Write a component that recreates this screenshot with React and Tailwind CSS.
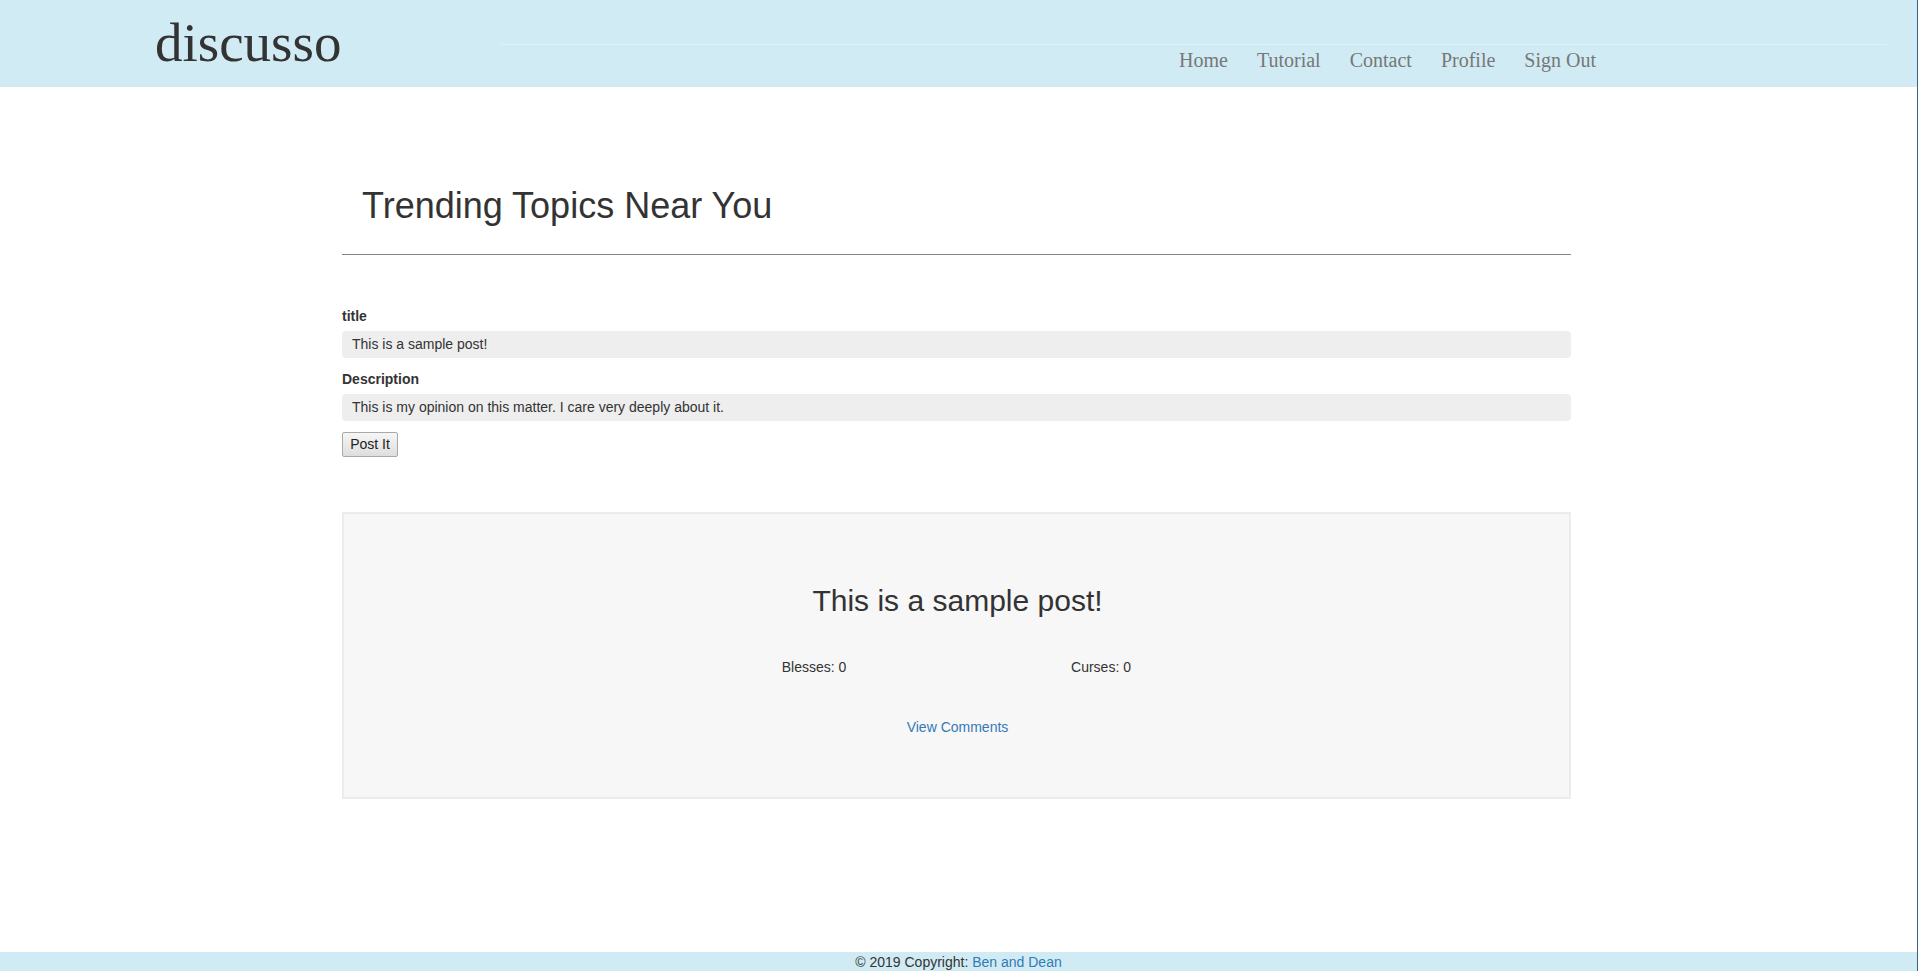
import React from 'react';

const navLinks = ['Home', 'Tutorial', 'Contact', 'Profile', 'Sign Out'];

function Header() {
  return (
    <header className="h-[87px] bg-[#d0ebf3] border-b border-[#dbe7eb] flex font-['Liberation_Serif',Georgia,serif]">
      <div className="pl-[155px] pt-[15px]">
        <span className="text-[55px] leading-none text-[#333]">discusso</span>
      </div>
      <div className="flex-1 ml-[159px] mr-[30px] mt-[44px]">
        <nav className="border-t border-[#e2f0f5] pt-[5px] pr-[291px] flex justify-end gap-[29px]">
          {navLinks.map((link) => (
            <a key={link} href="#" className="text-[20px] leading-none text-[#777]">
              {link}
            </a>
          ))}
        </nav>
      </div>
    </header>
  );
}

function PostForm() {
  return (
    <form className="mt-[51px] flex flex-col items-start">
      <label className="font-bold text-[14px] leading-5 mb-[5px]">title</label>
      <div className="w-full h-[27px] rounded bg-[#eee] pl-[10px] flex items-center text-[14px]">
        This is a sample post!
      </div>
      <label className="font-bold text-[14px] leading-5 mb-[5px] mt-[11px]">Description</label>
      <div className="w-full h-[27px] rounded bg-[#eee] pl-[10px] flex items-center text-[14px]">
        This is my opinion on this matter. I care very deeply about it.
      </div>
      <button
        type="button"
        className="mt-[11px] w-[56px] h-[25px] text-[14px] text-[#222] rounded-[2px] border border-[#a9a9a9] bg-gradient-to-b from-[#f6f6f6] to-[#dedede]"
      >
        Post It
      </button>
    </form>
  );
}

function PostCard({ title, blesses, curses }) {
  return (
    <div className="mt-[55px] h-[287px] border-2 border-[#ececec] bg-[#f7f7f7] flex flex-col items-center pt-[70px] pl-[2px]">
      <h2 className="text-[30px] leading-[33px]">{title}</h2>
      <div className="mt-[40px] flex text-[14px] leading-5">
        <span className="w-[287px] text-center">Blesses: {blesses}</span>
        <span className="w-[287px] text-center">Curses: {curses}</span>
      </div>
      <a href="#" className="mt-[40px] text-[14px] leading-5 text-[#337ab7]">
        View Comments
      </a>
    </div>
  );
}

export default function App() {
  return (
    <div className="min-h-screen flex flex-col bg-white text-[#333] font-['Liberation_Sans',Arial,sans-serif] border-r border-[#35658a]">
      <Header />
      <main className="ml-[342px] w-[1229px]">
        <h1 className="mt-[99px] pl-[20px] text-[36px] leading-[40px]">Trending Topics Near You</h1>
        <div className="mt-[28px] h-px bg-[#858585]" />
        <PostForm />
        <PostCard title="This is a sample post!" blesses={0} curses={0} />
      </main>
      <footer className="mt-auto h-[19px] pt-px bg-[#d0ebf3] text-center text-[14px] leading-[18px]">
        © 2019 Copyright: <a href="#" className="text-[#337ab7]">Ben and Dean</a>
      </footer>
    </div>
  );
}
